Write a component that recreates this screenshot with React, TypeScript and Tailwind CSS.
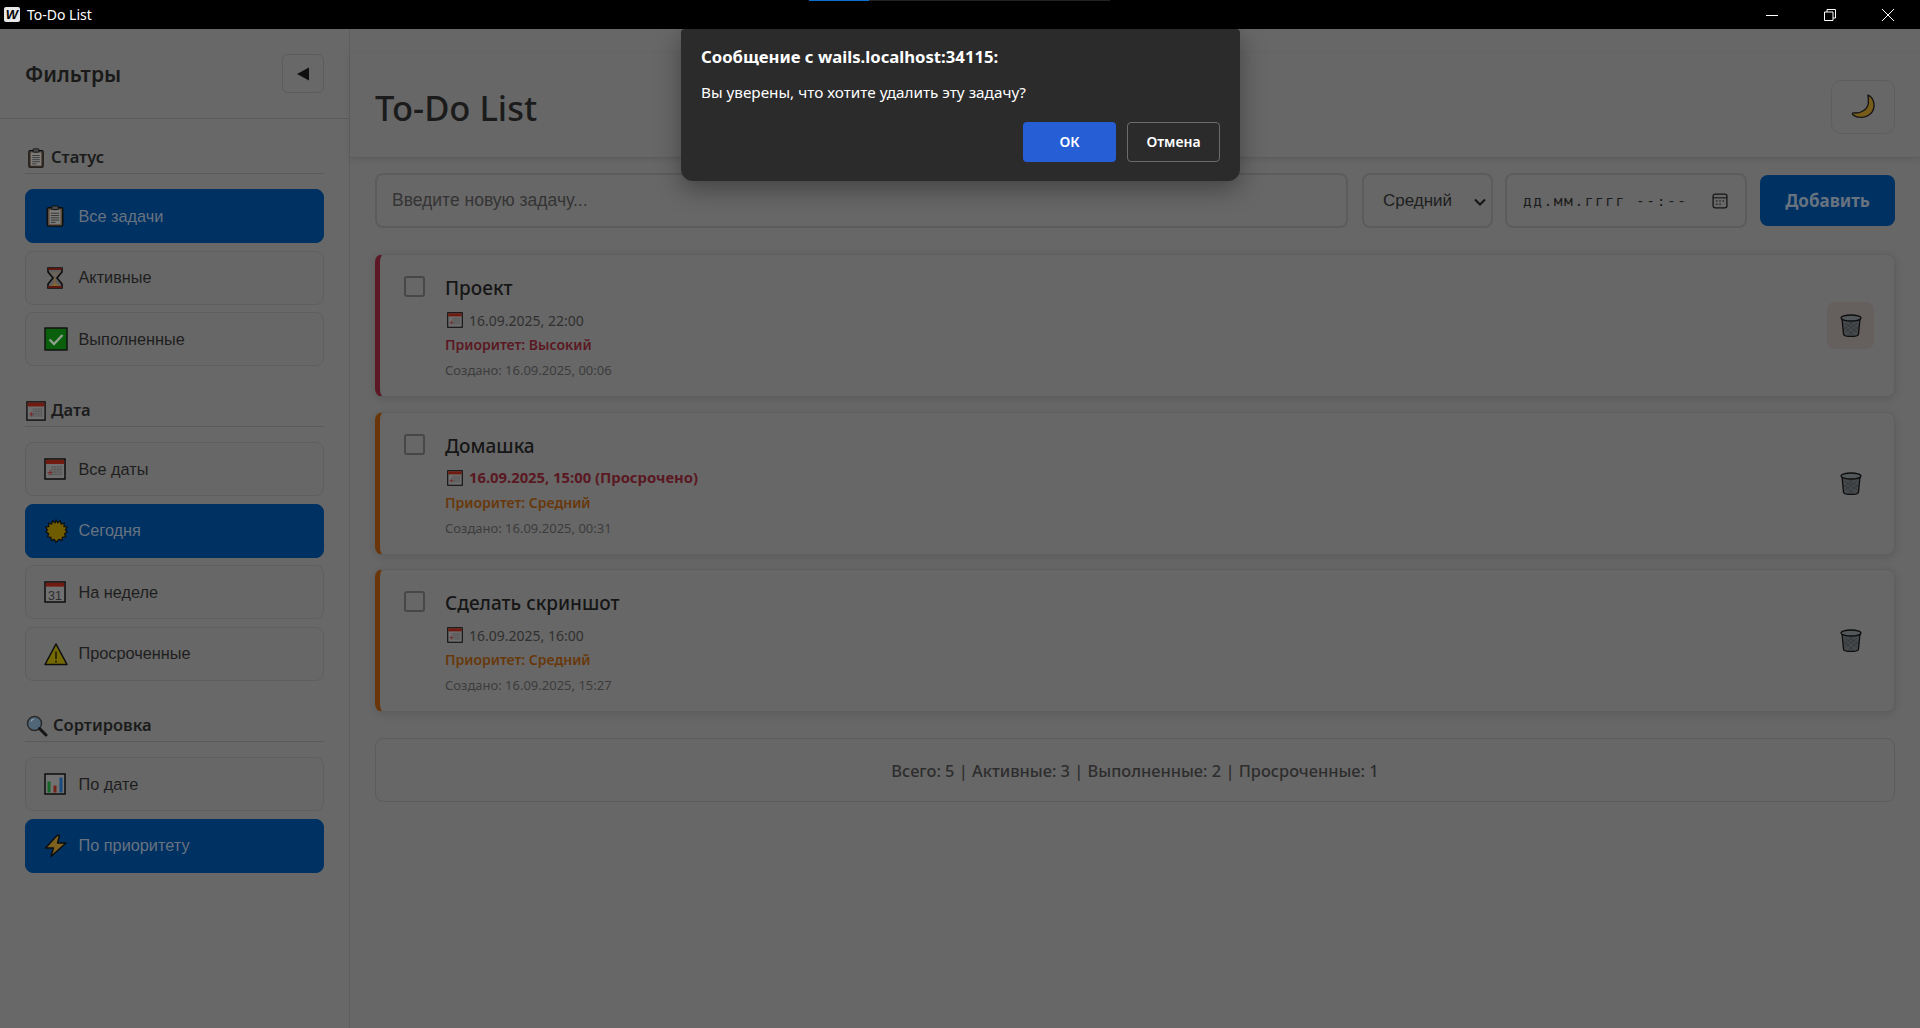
import type { ReactNode } from "react";

const ui = "font-['Noto_Sans','Open_Sans',sans-serif]";
const arial = "font-['Liberation_Sans',Arial,sans-serif]";

const ClipboardIcon = ({ size = 22 }: { size?: number }) => (
    <svg width={size} height={size} viewBox="0 0 22 24">
        <rect x="2.500" y="3" width="17" height="20" rx="1.500" fill="#5c4a3a" stroke="#0d0d0d" strokeWidth="1.500" />
        <rect x="5" y="5.500" width="12" height="15.500" fill="#7c7c7a" />
        <rect x="7.500" y="1" width="7" height="4" rx="1" fill="#4a4b4f" stroke="#0d0d0d" />
        <path d="M6.500 9h9M6.500 11.500h9M6.500 14h9M6.500 16.500h9M6.500 19h5" stroke="#303030" strokeWidth="1" />
    </svg>
);

const HourglassIcon = () => (
    <svg width="22" height="24" viewBox="0 0 22 24">
        <path d="M4 2h14v4l-5 6 5 6v4H4v-4l5-6-5-6z" fill="#5e5e5e" stroke="#0d0d0d" strokeWidth="1.600" />
        <rect x="4" y="2" width="14" height="2" fill="#5e170f" />
        <rect x="4" y="20" width="14" height="2" fill="#5e170f" />
        <path d="M10.400 12h1.200v5l3.500 3H6.900l3.500-3z" fill="#856530" />
        <path d="M6.500 6.500h9L11 11.500z" fill="#6d6458" />
    </svg>
);

const CheckIcon = () => (
    <svg width="24" height="24" viewBox="0 0 24 24">
        <rect x="1" y="1" width="22" height="22" fill="#0a5f0c" stroke="#0d0d0d" strokeWidth="1.400" />
        <path d="M5.500 12.500l4.500 4.500 8.500-9" fill="none" stroke="#8f9f8f" strokeWidth="2.400" />
    </svg>
);

const CalendarIcon = ({ size = 22 }: { size?: number }) => (
    <svg width={size} height={size} viewBox="0 0 22 22">
        <rect x="1" y="1" width="20" height="20" fill="#6e6e6e" stroke="#0d0d0d" strokeWidth="1.500" />
        <rect x="1.800" y="1.800" width="18.400" height="4.200" fill="#701a10" />
        <path d="M8 9h10M8 11.500h10M8 14h10M4 16.500h14M8 8v9M11 8v9M14 8v9M17 8v9" stroke="#565656" strokeWidth="0.800" />
        <path d="M3.500 14.500h5M6 12v5" stroke="#7a2a2a" strokeWidth="1.100" />
    </svg>
);

const SunIcon = () => (
    <svg width="24" height="24" viewBox="0 0 24 24">
        <path
            d="M12 .8l1.700 3 2.600-2 .8 3.200 3.200-.8-.4 3.300 3.300.6-1.800 2.800L23.300 13l-2.700 1.800 1.100 3-3.200.4-.5 3.200-3-1L12 23.200l-1.700-2.800-3 1-.5-3.200-3.200-.4 1.100-3L2 13l1.400-2.100L1.600 8.100l3.300-.6-.4-3.300 3.200.8.800-3.200 2.600 2z"
            fill="#6f5c00"
            stroke="#0d0d0d"
            strokeWidth="1.200"
        />
    </svg>
);

const MonthIcon = () => (
    <svg width="22" height="22" viewBox="0 0 22 22">
        <rect x="1" y="1" width="20" height="20" fill="#717171" stroke="#0d0d0d" strokeWidth="1.500" />
        <rect x="1.800" y="1.800" width="18.400" height="3.800" fill="#701a10" />
        <text x="11" y="18.500" textAnchor="middle" fontSize="12.500" fontFamily="Liberation Sans" fill="#2c2c2c">
            31
        </text>
    </svg>
);

const WarningIcon = () => (
    <svg width="24" height="24" viewBox="0 0 24 24">
        <path d="M12 2L23 22.500H1z" fill="#746800" stroke="#0d0d0d" strokeWidth="1.500" strokeLinejoin="round" />
        <path d="M12 9.500v7.500M12 18.500v2" stroke="#0d0d0d" strokeWidth="1.300" />
    </svg>
);

const SearchIcon = () => (
    <svg width="22" height="22" viewBox="0 0 22 22">
        <circle cx="8.500" cy="8.500" r="7" fill="#50677a" stroke="#2a2a2a" strokeWidth="1.500" />
        <path d="M13.500 13.500L20 20" stroke="#151515" strokeWidth="3" strokeLinecap="round" />
        <path d="M5 6.500a4 4 0 0 1 3-2.500" stroke="#8f9ca4" strokeWidth="1.200" fill="none" />
    </svg>
);

const BarsIcon = () => (
    <svg width="22" height="22" viewBox="0 0 22 22">
        <rect x="1" y="1" width="20" height="20" fill="#727272" stroke="#0d0d0d" strokeWidth="1.500" />
        <rect x="3.500" y="8.500" width="3" height="11" fill="#146628" />
        <rect x="9.500" y="12.500" width="3" height="7" fill="#722318" />
        <rect x="15.500" y="4.500" width="3" height="15" fill="#174b7e" />
    </svg>
);

const BoltIcon = () => (
    <svg width="24" height="24" viewBox="0 0 24 24">
        <path d="M13 1.500L1.500 14h8L7 22.500 22 9h-8.500L15.500 1.500z" fill="#7c611f" stroke="#0d0d0d" strokeWidth="1.400" strokeLinejoin="round" />
    </svg>
);

const TrashIcon = () => (
    <svg width="22" height="23" viewBox="0 0 22 23">
        <path d="M2 4.500l1.500 15.500c0 1.500 3.500 2.500 7.500 2.500s7.500-1 7.500-2.500L20 4.500z" fill="#45494b" stroke="#0d0d0d" strokeWidth="1.300" />
        <ellipse cx="11" cy="4" rx="10" ry="3" fill="#52575a" stroke="#0d0d0d" strokeWidth="1.300" />
        <path d="M5 9l12 9M9 8l9 7M4.500 13l9 8M17 9L5 18M13 8l-9 7M17.500 13l-9 8" stroke="#2f3234" strokeWidth="0.700" />
    </svg>
);

const MoonIcon = () => (
    <svg width="28" height="28" viewBox="0 0 26 26">
        <path d="M17.500 2c5.500 2 7.500 10 4 15.500-3.500 5-12 7-17.500 3-1.200-1-1-2.200.5-2 6 .8 13-3 13.500-9.500.2-2.500 0-4.500-.5-7z" fill="#785c1a" stroke="#161616" strokeWidth="1.300" strokeLinejoin="round" />
    </svg>
);

const FilterButton = ({ icon, label, active }: { icon: ReactNode; label: string; active?: boolean }) => (
    <button
        className={
            active
                ? `flex h-[54px] w-full items-center rounded-[8px] border border-[#003163] bg-[#003163] pl-[18px] text-[16.300px] text-[#687380] ${arial}`
                : `flex h-[54px] w-full items-center rounded-[8px] border border-[#5f5f5f] bg-[#676767] pl-[18px] text-[16.300px] text-[#1e1e1e] ${arial}`
        }
    >
        <span className="flex w-[34.500px] justify-start">{icon}</span>
        {label}
    </button>
);

const SectionTitle = ({ icon, label }: { icon: ReactNode; label: string }) => (
    <h3 className={`mb-[15px] flex h-[28px] items-center gap-[5px] border-b border-[#5a5a5a] pb-[4px] pl-[1px] text-[16.500px] font-semibold text-[#1b1b1b] ${ui}`}>
        {icon}
        {label}
    </h3>
);

interface ITask {
    title: string;
    due: string;
    overdue?: boolean;
    priority: string;
    created: string;
    high?: boolean;
    hover?: boolean;
}

const tasks: ITask[] = [
    { title: "Проект", due: "16.09.2025, 22:00", priority: "Приоритет: Высокий", created: "Создано: 16.09.2025, 00:06", high: true, hover: true },
    { title: "Домашка", due: "16.09.2025, 15:00 (Просрочено)", overdue: true, priority: "Приоритет: Средний", created: "Создано: 16.09.2025, 00:31" },
    { title: "Сделать скриншот", due: "16.09.2025, 16:00", priority: "Приоритет: Средний", created: "Создано: 16.09.2025, 15:27" },
];

const TaskCard = ({ task }: { task: ITask }) => (
    <div
        className={
            task.high
                ? "flex h-[143px] items-center rounded-[8px] border border-l-[5px] border-[#5f5f5f] border-l-[#5c1824] bg-[#676767] pr-[20px] shadow-[0_2px_8px_rgba(0,0,0,0.12)]"
                : "flex h-[143px] items-center rounded-[8px] border border-l-[5px] border-[#5f5f5f] border-l-[#6a3609] bg-[#676767] pr-[20px] shadow-[0_2px_8px_rgba(0,0,0,0.12)]"
        }
    >
        <div className="flex h-full flex-1 pl-[24px] pt-[21px]">
            <input type="checkbox" className="h-[21px] w-[21px] appearance-none rounded-[3px] border-2 border-[#474747]" />
            <div className={`ml-[20px] flex flex-col ${ui}`}>
                <div className="-mt-[1px] h-[26px] text-[19px] font-medium leading-[26px] text-[#161616]">{task.title}</div>
                <div
                    className={
                        task.overdue
                            ? "mt-[8px] flex h-[22px] items-center gap-[6px] pl-[2px] text-[14.800px] font-bold text-[#5a1822]"
                            : "mt-[8px] flex h-[22px] items-center gap-[6px] pl-[2px] text-[14px] text-[#303030]"
                    }
                >
                    <CalendarIcon size={16} />
                    {task.due}
                </div>
                <div className={task.high ? "mt-[3px] h-[22px] text-[14px] font-semibold leading-[22px] text-[#5a1822]" : "mt-[3px] h-[22px] text-[14px] font-semibold leading-[22px] text-[#68380b]"}>
                    {task.priority}
                </div>
                <div className="mt-[4px] h-[20px] text-[13px] leading-[20px] text-[#3c3c3c]">{task.created}</div>
            </div>
        </div>
        <button className={task.hover ? "flex h-[47px] w-[47px] items-center justify-center rounded-[8px] bg-[#655f5e]" : "flex h-[47px] w-[47px] items-center justify-center rounded-[8px]"}>
            <TrashIcon />
        </button>
    </div>
);

export default function App() {
    return (
        <div className="relative flex h-screen w-full flex-col overflow-hidden bg-[#646665]">
            {/* title bar */}
            <div className="flex h-[29px] shrink-0 items-center bg-black pl-[4px] text-white">
                <span className={`flex h-[15px] w-[16px] items-center justify-center rounded-[2px] bg-[#e8e8e8] text-[13px] font-black italic leading-none text-black ${arial}`}>W</span>
                <span className={`ml-[7px] text-[14px] ${ui}`}>To-Do List</span>
                <div className="ml-auto flex items-center">
                    <svg width="12" height="12" viewBox="0 0 12 12" className="mr-[46px]">
                        <path d="M0 6.500h12" stroke="white" />
                    </svg>
                    <svg width="12" height="12" viewBox="0 0 12 12" className="mr-[46px]">
                        <path d="M.5 3h8.500v8.500H.5zM3 3V.5h8.500V9H9" fill="none" stroke="white" />
                    </svg>
                    <svg width="12" height="12" viewBox="0 0 12 12" className="mr-[26px]">
                        <path d="M0 0l12 12M12 0L0 12" stroke="white" />
                    </svg>
                </div>
            </div>

            <div className="flex min-h-0 flex-1">
                {/* sidebar */}
                <aside className="w-[350px] shrink-0 border-r border-[#5e5e5e] bg-[#676867]">
                    <div className="flex h-[90px] items-center justify-between border-b border-[#5b5b5b] px-[25px]">
                        <h2 className={`pt-[2px] text-[21px] font-semibold text-[#1a1a1a] ${ui}`}>Фильтры</h2>
                        <button className="flex h-[39px] w-[42px] items-center justify-center rounded-[6px] border border-[#5c5c5c]">
                            <svg width="14" height="14" viewBox="0 0 14 14">
                                <path d="M1 7l12-6.500v13z" fill="#0f0f0f" />
                            </svg>
                        </button>
                    </div>
                    <div className="px-[25px] pt-[27px]">
                        <SectionTitle icon={<ClipboardIcon size={20} />} label="Статус" />
                        <div className="flex flex-col gap-[7.500px]">
                            <FilterButton icon={<ClipboardIcon />} label="Все задачи" active />
                            <FilterButton icon={<HourglassIcon />} label="Активные" />
                            <FilterButton icon={<CheckIcon />} label="Выполненные" />
                        </div>
                        <div className="h-[33px]" />
                        <SectionTitle icon={<CalendarIcon size={20} />} label="Дата" />
                        <div className="flex flex-col gap-[7.500px]">
                            <FilterButton icon={<CalendarIcon />} label="Все даты" />
                            <FilterButton icon={<SunIcon />} label="Сегодня" active />
                            <FilterButton icon={<MonthIcon />} label="На неделе" />
                            <FilterButton icon={<WarningIcon />} label="Просроченные" />
                        </div>
                        <div className="h-[33.500px]" />
                        <SectionTitle icon={<SearchIcon />} label="Сортировка" />
                        <div className="flex flex-col gap-[7.500px]">
                            <FilterButton icon={<BarsIcon />} label="По дате" />
                            <FilterButton icon={<BoltIcon />} label="По приоритету" active />
                        </div>
                    </div>
                </aside>

                {/* main */}
                <main className="min-w-0 flex-1 bg-[#666766] pt-[24px]">
                    <header className="flex h-[105px] items-center justify-between border-b border-[#5c5c5c] bg-[#676767] px-[25px] pt-[3px] shadow-[0_2px_6px_rgba(0,0,0,0.08)]">
                        <h1 className={`pt-[2px] text-[34.500px] font-medium text-[#1b1b1b] ${ui}`}>To-Do List</h1>
                        <button className="flex h-[54px] w-[64px] items-center justify-center rounded-[10px] border border-[#5e5e5e]">
                            <MoonIcon />
                        </button>
                    </header>
                    <div className="px-[25px]">
                        <div className="mt-[15px] flex items-center">
                            <input
                                placeholder="Введите новую задачу..."
                                className={`h-[55px] flex-1 rounded-[8px] border-2 border-[#5c5c5c] bg-[#676767] px-[15px] text-[17.500px] outline-none placeholder:text-[#343434] ${arial}`}
                            />
                            <div className="relative ml-[14px] h-[55px] w-[131px]">
                                <select className={`h-full w-full appearance-none rounded-[8px] border-2 border-[#5c5c5c] bg-[#676767] pb-[1px] pl-[19px] pt-[2px] text-[17px] text-[#1e1e1e] ${arial}`}>
                                    <option>Средний</option>
                                </select>
                                <svg width="12" height="8" viewBox="0 0 12 8" className="pointer-events-none absolute right-[7px] top-[25px]">
                                    <path d="M1 1.500l5 5 5-5" fill="none" stroke="#141414" strokeWidth="2" />
                                </svg>
                            </div>
                            <div className="ml-[12px] flex h-[55px] w-[242px] items-center justify-between rounded-[8px] border-2 border-[#5c5c5c] bg-[#676767] pl-[16px] pr-[17px]">
                                <span className="pt-[2px] font-['DejaVu_Sans_Mono',monospace] text-[14.500px] tracking-[1.550px] text-[#1c1c1c]">дд.мм.гггг --:--</span>
                                <svg width="16" height="16" viewBox="0 0 15 15">
                                    <rect x="1" y="1" width="13" height="13" rx="2" fill="none" stroke="#151515" strokeWidth="1.200" />
                                    <path d="M1 4.500h13" stroke="#151515" />
                                    <path d="M4 7.500h1M7 7.500h1M10 7.500h1M4 10.500h1M7 10.500h1" stroke="#151515" strokeWidth="1.400" />
                                </svg>
                            </div>
                            <button className={`ml-[13px] h-[51px] w-[135px] rounded-[8px] bg-[#003163] text-[17px] font-bold text-[#687380] ${ui}`}>Добавить</button>
                        </div>
                        <div className="mt-[26px] flex flex-col gap-[14.500px]">
                            {tasks.map((task) => (
                                <TaskCard key={task.title} task={task} />
                            ))}
                        </div>
                        <div className={`mt-[26px] flex h-[64px] items-center justify-center rounded-[8px] border border-[#5c5c5c] bg-[#676767] pt-[2px] text-[16.400px] font-medium text-[#2d2d2d] ${ui}`}>
                            Всего: 5 | Активные: 3 | Выполненные: 2 | Просроченные: 1
                        </div>
                    </div>
                </main>
            </div>

            {/* loading line behind the title bar */}
            <div className="absolute left-[809px] top-0 h-px w-[301px] bg-[#222]">
                <div className="h-px w-[60px] bg-[#0a6fd0]" />
            </div>

            {/* native confirm dialog */}
            <div className={`absolute left-[681px] top-[29px] h-[152px] w-[559px] rounded-b-[12px] rounded-t-[4px] bg-[#2b2b2b] px-[20px] pt-[16px] text-white shadow-[0_8px_24px_rgba(0,0,0,0.35)] ${ui}`}>
                <div className="text-[16.700px] font-bold leading-[24px]">Сообщение с wails.localhost:34115:</div>
                <div className="mt-[11px] text-[15.300px] leading-[24px]">Вы уверены, что хотите удалить эту задачу?</div>
                <div className="absolute bottom-[19px] right-[20px] flex gap-[11px]">
                    <button className="h-[40px] w-[93px] rounded-[4px] bg-[#255ed5] pb-[1px] text-[14px] font-semibold">ОК</button>
                    <button className="h-[40px] w-[93px] rounded-[4px] border border-[#6b6b6b] pb-[1px] text-[14px] font-semibold">Отмена</button>
                </div>
            </div>
        </div>
    );
}
